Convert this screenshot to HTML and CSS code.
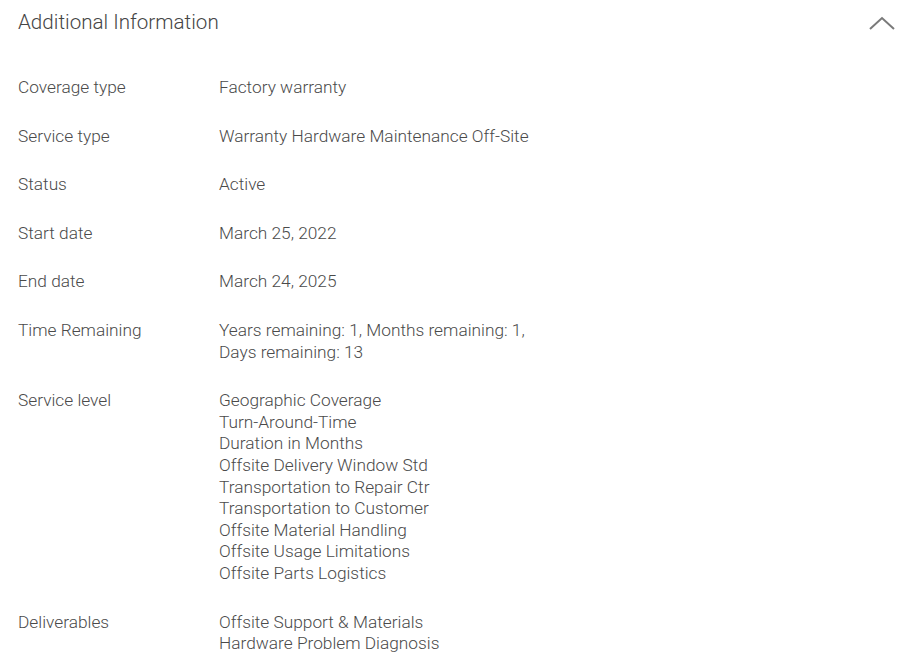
FILE: index.html
```html
<!DOCTYPE html>
<html lang="en">
<head>
<meta charset="utf-8">
<title>Additional Information</title>
<link rel="stylesheet" href="styles.css">
</head>
<body>
<section class="panel">
  <header class="panel-head">
    <h2 class="panel-title">Additional Information</h2>
    <svg class="chevron" width="28" height="16" viewBox="0 0 28 16" aria-hidden="true">
      <polyline points="2,14 14,3 26,14" fill="none" stroke="#7a7a7a" stroke-width="2"/>
    </svg>
  </header>
  <dl class="info">
    <dt>Coverage type</dt><dd>Factory warranty</dd>
    <dt>Service type</dt><dd>Warranty Hardware Maintenance Off-Site</dd>
    <dt>Status</dt><dd>Active</dd>
    <dt>Start date</dt><dd>March 25, 2022</dd>
    <dt>End date</dt><dd>March 24, 2025</dd>
    <dt>Time Remaining</dt><dd>Years remaining: 1, Months remaining: 1,<br>Days remaining: 13</dd>
    <dt>Service level</dt><dd>Geographic Coverage<br>Turn-Around-Time<br>Duration in Months<br>Offsite Delivery Window Std<br>Transportation to Repair Ctr<br>Transportation to Customer<br>Offsite Material Handling<br>Offsite Usage Limitations<br>Offsite Parts Logistics</dd>
    <dt>Deliverables</dt><dd>Offsite Support &amp; Materials<br>Hardware Problem Diagnosis</dd>
  </dl>
</section>
</body>
</html>
```
FILE: styles.css
```css
html, body {
  margin: 0;
  padding: 0;
  background: #ffffff;
}
body {
  font-family: Roboto, "Liberation Sans", sans-serif;
  font-weight: 300;
  color: #4a4a4a;
}
.panel {
  padding: 8px 24px 0 18px;
}
.panel-head {
  display: flex;
  align-items: center;
  justify-content: space-between;
  height: 28px;
}
.panel-title {
  margin: 0;
  font-size: 20.6px;
  font-weight: 300;
  line-height: 28px;
  color: #454545;
}
.chevron {
  display: block;
  margin-top: 2px;
}
.info {
  margin: 41px 0 0 0;
  display: grid;
  grid-template-columns: 201px 1fr;
  row-gap: 27px;
  font-size: 17.3px;
  line-height: 21.6px;
}
.info dt, .info dd {
  margin: 0;
}
```
